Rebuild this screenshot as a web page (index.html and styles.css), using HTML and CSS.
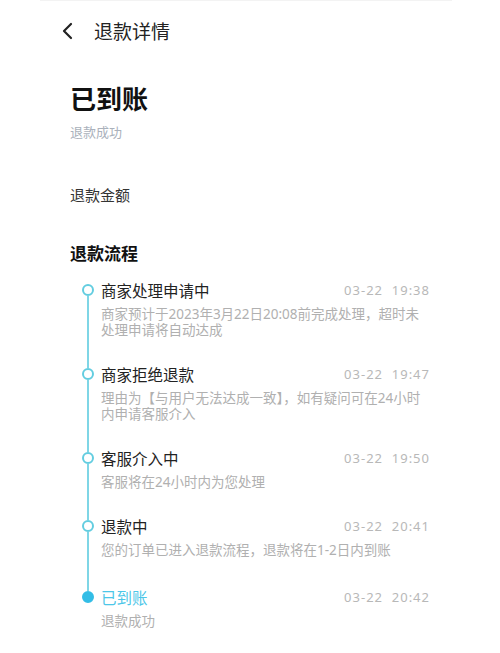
FILE: index.html
```html
<!DOCTYPE html>
<html lang="zh-CN">
<head>
    <meta charset="UTF-8">
    <meta name="viewport" content="width=device-width, initial-scale=1.0">
    <title>退款详情</title>
    <link rel="stylesheet" href="styles.css">
</head>
<body>
    <header class="nav">
        <span class="nav-back">
            <svg width="14" height="18" viewBox="0 0 14 18"><path d="M10 2 L3 9 L10 16" fill="none" stroke="#222" stroke-width="2.2" stroke-linecap="round" stroke-linejoin="round"/></svg>
        </span>
        <span class="nav-title">退款详情</span>
    </header>

    <main class="page">
        <section class="status">
            <h1>已到账</h1>
            <p>退款成功</p>
        </section>

        <section class="amount">退款金额</section>

        <section class="flow">
            <h2>退款流程</h2>
            <ul class="timeline">
                <li class="step">
                    <div class="step-head">
                        <span class="step-title">商家处理申请中</span>
                        <span class="step-time">03-22&nbsp; 19:38</span>
                    </div>
                    <p class="step-desc">商家预计于2023年3月22日20:08前完成处理，超时未处理申请将自动达成</p>
                </li>
                <li class="step">
                    <div class="step-head">
                        <span class="step-title">商家拒绝退款</span>
                        <span class="step-time">03-22&nbsp; 19:47</span>
                    </div>
                    <p class="step-desc">理由为【与用户无法达成一致】，如有疑问可在24小时内申请客服介入</p>
                </li>
                <li class="step">
                    <div class="step-head">
                        <span class="step-title">客服介入中</span>
                        <span class="step-time">03-22&nbsp; 19:50</span>
                    </div>
                    <p class="step-desc">客服将在24小时内为您处理</p>
                </li>
                <li class="step">
                    <div class="step-head">
                        <span class="step-title">退款中</span>
                        <span class="step-time">03-22&nbsp; 20:41</span>
                    </div>
                    <p class="step-desc">您的订单已进入退款流程，退款将在1-2日内到账</p>
                </li>
                <li class="step done">
                    <div class="step-head">
                        <span class="step-title">已到账</span>
                        <span class="step-time">03-22&nbsp; 20:42</span>
                    </div>
                    <p class="step-desc">退款成功</p>
                </li>
            </ul>
        </section>
    </main>
</body>
</html>
```

FILE: styles.css
```css
body {
    margin: 0;
    background: #fff;
    color: #222;
    font-family: "Noto Sans", "Noto Sans CJK SC", sans-serif;
}

.nav {
    display: flex;
    align-items: center;
    height: 60px;
    border-top: 1px solid #f3f3f3;
    margin: 0 48px 0 40px;
    padding-left: 21px;
}

.nav-back {
    display: flex;
    width: 33px;
}

.nav-title {
    font-size: 19px;
    color: #222;
}

.page {
    padding: 0 70px;
}

.status {
    padding-top: 21px;
}

.status h1 {
    margin: 0;
    font-size: 26px;
    line-height: 34px;
    font-weight: 700;
    color: #111;
}

.status p {
    margin: 7px 0 0;
    font-size: 13px;
    line-height: 18px;
    color: #aab1bb;
}

.amount {
    margin-top: 43px;
    font-size: 15px;
    line-height: 22px;
    color: #333;
}

.flow h2 {
    margin: 36px 0 0;
    font-size: 17px;
    line-height: 24px;
    font-weight: 700;
    color: #111;
}

.timeline {
    list-style: none;
    margin: 12px 0 0;
    padding: 0;
}

.step {
    position: relative;
    padding: 0 0 24px 31px;
}

.step:nth-child(4) {
    padding-bottom: 27px;
}

/* dot on the line */
.step::before {
    content: "";
    position: absolute;
    left: 12px;
    top: 6px;
    width: 8px;
    height: 8px;
    border: 2px solid #63cde0;
    border-radius: 50%;
    background: #fff;
}

/* connector down to the next dot */
.step::after {
    content: "";
    position: absolute;
    left: 17px;
    top: 18px;
    bottom: -6px;
    width: 2px;
    background: #7fd6e6;
}

.step.done::after {
    display: none;
}

.step.done::before {
    border-color: #33bde6;
    background: #33bde6;
}

.step-head {
    display: flex;
    justify-content: space-between;
    align-items: center;
    height: 24px;
}

.step-title {
    font-size: 15.5px;
    color: #222;
}

.step.done .step-title {
    color: #4cc6e8;
}

.step-time {
    font-size: 13px;
    letter-spacing: 1px;
    color: #b8b8b8;
    white-space: pre;
}

.step-desc {
    margin: 4px 0 0;
    max-width: 322px;
    font-size: 13.5px;
    line-height: 16px;
    color: #b0b0b0;
}
```
